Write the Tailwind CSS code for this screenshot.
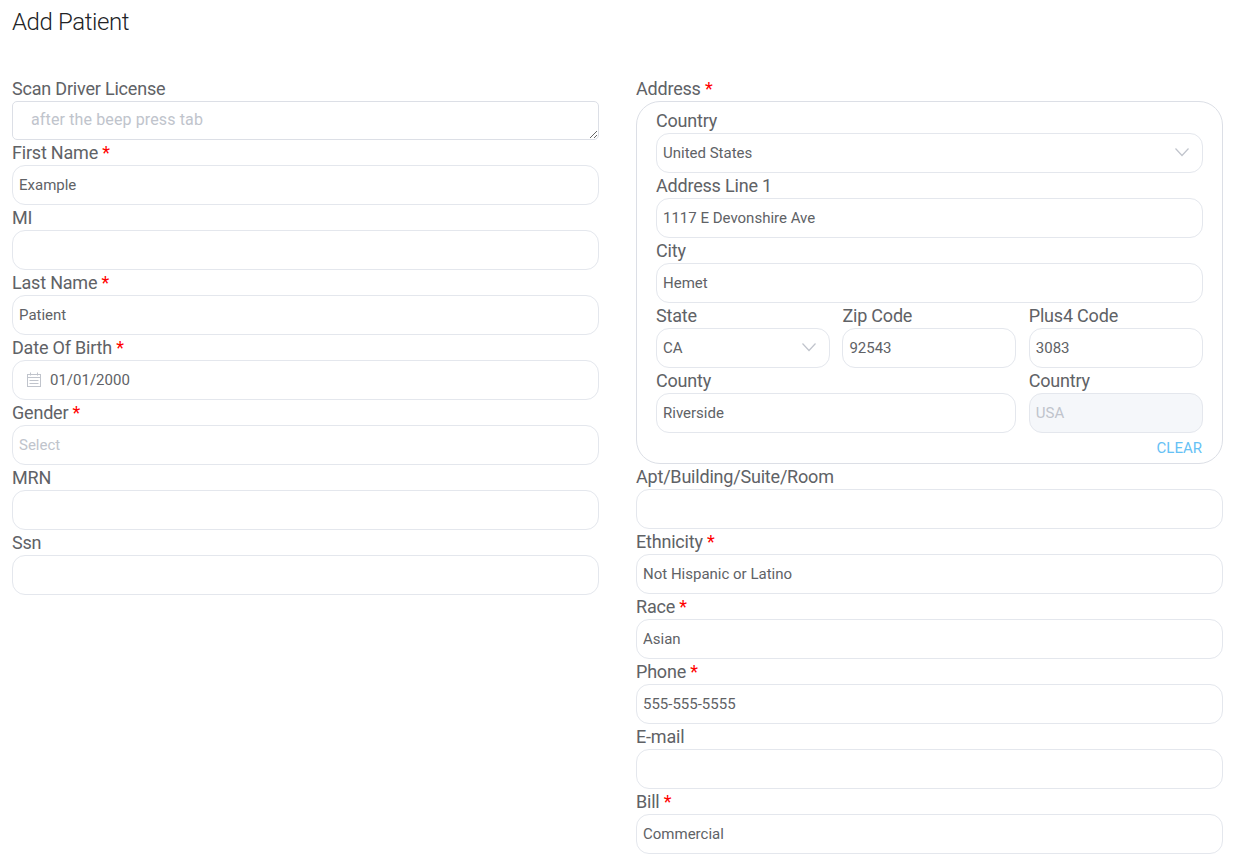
<!DOCTYPE html>
<html>
<head>
<meta charset="utf-8" />
<title>Add Patient</title>
<script src="https://cdn.jsdelivr.net/npm/@tailwindcss/browser@4"></script>
</head>
<body class="bg-white font-['Roboto',sans-serif] overflow-hidden">
<div class="h-[863px] pl-3 pr-[10px] [&_label]:tracking-[-0.2px]">
  <h1 class="h-[76px] pt-[6px] text-[24px] leading-8 font-light tracking-[-0.4px] text-[#222326]">Add Patient</h1>
  <div class="grid grid-cols-2 gap-x-[37px] items-start">

    <!-- left column -->
    <div>
      <label class="block h-[25px] text-[18px] leading-[25px] text-[#606266]">Scan Driver License</label>
      <textarea placeholder="after the beep press tab" class="block w-full h-[39px] border border-[#dcdfe6] rounded-[5px] px-[18px] py-[6px] text-[16px] leading-6 tracking-[0.13px] text-[#606266] placeholder:text-[#c0c4cc] outline-none"></textarea>

      <label class="block h-[25px] text-[18px] leading-[25px] text-[#606266]">First Name <span class="text-[#ff0000]">*</span></label>
      <input value="Example" class="block w-full h-10 border border-[#e4e7ed] rounded-[13px] px-[6px] text-[15px] text-[#606266] outline-none" />

      <label class="block h-[25px] text-[18px] leading-[25px] text-[#606266]">MI</label>
      <input class="block w-full h-10 border border-[#e4e7ed] rounded-[13px] px-[6px] text-[15px] text-[#606266] outline-none" />

      <label class="block h-[25px] text-[18px] leading-[25px] text-[#606266]">Last Name <span class="text-[#ff0000]">*</span></label>
      <input value="Patient" class="block w-full h-10 border border-[#e4e7ed] rounded-[13px] px-[6px] text-[15px] text-[#606266] outline-none" />

      <label class="block h-[25px] text-[18px] leading-[25px] text-[#606266]">Date Of Birth <span class="text-[#ff0000]">*</span></label>
      <div class="flex items-center h-10 border border-[#e4e7ed] rounded-[13px] pl-[13px] text-[15px] text-[#606266]">
        <svg class="w-[16px] h-[16px] mr-[8px] text-[#c0c4cc]" viewBox="0 0 16 16" fill="none" stroke="currentColor" stroke-width="1">
          <rect x="1.5" y="2.5" width="13" height="12" />
          <path d="M1.5 5.5h13M4.5 0.5v3M11.5 0.5v3M3.5 8.5h9M3.5 11.5h9" />
        </svg>
        <span>01/01/2000</span>
      </div>

      <label class="block h-[25px] text-[18px] leading-[25px] text-[#606266]">Gender <span class="text-[#ff0000]">*</span></label>
      <input placeholder="Select" class="block w-full h-10 border border-[#e4e7ed] rounded-[13px] px-[6px] text-[15px] placeholder:text-[#c0c4cc] outline-none" />

      <label class="block h-[25px] text-[18px] leading-[25px] text-[#606266]">MRN</label>
      <input class="block w-full h-10 border border-[#e4e7ed] rounded-[13px] px-[6px] text-[15px] text-[#606266] outline-none" />

      <label class="block h-[25px] text-[18px] leading-[25px] text-[#606266]">Ssn</label>
      <input class="block w-full h-10 border border-[#e4e7ed] rounded-[13px] px-[6px] text-[15px] text-[#606266] outline-none" />
    </div>

    <!-- right column -->
    <div>
      <label class="block h-[25px] text-[18px] leading-[25px] text-[#606266]">Address <span class="text-[#ff0000]">*</span></label>
      <div class="h-[363px] border border-[#dcdfe6] rounded-[24px] px-[19px] pt-[6px]">
        <label class="block h-[25px] text-[18px] leading-[25px] text-[#606266]">Country</label>
        <div class="flex items-center justify-between h-10 border border-[#e4e7ed] rounded-[13px] pl-[6px] pr-[12px] text-[15px] text-[#606266]">
          <span>United States</span>
          <svg class="w-[16px] h-[16px] text-[#c0c4cc]" viewBox="0 0 16 16" fill="none" stroke="currentColor" stroke-width="1.2"><path d="M1.5 3.5L8 10.5L14.5 3.5" /></svg>
        </div>

        <label class="block h-[25px] text-[18px] leading-[25px] text-[#606266]">Address Line 1</label>
        <input value="1117 E Devonshire Ave" class="block w-full h-10 border border-[#e4e7ed] rounded-[13px] px-[6px] text-[15px] text-[#606266] outline-none" />

        <label class="block h-[25px] text-[18px] leading-[25px] text-[#606266]">City</label>
        <input value="Hemet" class="block w-full h-10 border border-[#e4e7ed] rounded-[13px] px-[6px] text-[15px] text-[#606266] outline-none" />

        <div class="grid grid-cols-[174px_174px_174px] gap-x-[12.4px]">
          <div>
            <label class="block h-[25px] text-[18px] leading-[25px] text-[#606266]">State</label>
            <div class="flex items-center justify-between h-10 border border-[#e4e7ed] rounded-[13px] pl-[6px] pr-[12px] text-[15px] text-[#606266]">
              <span>CA</span>
              <svg class="w-[16px] h-[16px] text-[#c0c4cc]" viewBox="0 0 16 16" fill="none" stroke="currentColor" stroke-width="1.2"><path d="M1.5 3.5L8 10.5L14.5 3.5" /></svg>
            </div>
          </div>
          <div>
            <label class="block h-[25px] text-[18px] leading-[25px] text-[#606266]">Zip Code</label>
            <input value="92543" class="block w-full h-10 border border-[#e4e7ed] rounded-[13px] px-[6px] text-[15px] text-[#606266] outline-none" />
          </div>
          <div>
            <label class="block h-[25px] text-[18px] leading-[25px] text-[#606266]">Plus4 Code</label>
            <input value="3083" class="block w-full h-10 border border-[#e4e7ed] rounded-[13px] px-[6px] text-[15px] text-[#606266] outline-none" />
          </div>
          <div class="col-span-2">
            <label class="block h-[25px] text-[18px] leading-[25px] text-[#606266]">County</label>
            <input value="Riverside" class="block w-full h-10 border border-[#e4e7ed] rounded-[13px] px-[6px] text-[15px] text-[#606266] outline-none" />
          </div>
          <div>
            <label class="block h-[25px] text-[18px] leading-[25px] text-[#606266]">Country</label>
            <input disabled value="USA" class="block w-full h-10 border border-[#e4e7ed] bg-[#f5f7fa] rounded-[13px] px-[6px] text-[15px] text-[#c0c4cc] outline-none" />
          </div>
        </div>
        <div class="mt-[5px] pr-px text-right text-[15px] leading-5 text-[#66c1f5]">CLEAR</div>
      </div>

      <label class="block h-[25px] text-[18px] leading-[25px] text-[#606266]">Apt/Building/Suite/Room</label>
      <input class="block w-full h-10 border border-[#e4e7ed] rounded-[13px] px-[6px] text-[15px] text-[#606266] outline-none" />

      <label class="block h-[25px] text-[18px] leading-[25px] text-[#606266]">Ethnicity <span class="text-[#ff0000]">*</span></label>
      <input value="Not Hispanic or Latino" class="block w-full h-10 border border-[#e4e7ed] rounded-[13px] px-[6px] text-[15px] text-[#606266] outline-none" />

      <label class="block h-[25px] text-[18px] leading-[25px] text-[#606266]">Race <span class="text-[#ff0000]">*</span></label>
      <input value="Asian" class="block w-full h-10 border border-[#e4e7ed] rounded-[13px] px-[6px] text-[15px] text-[#606266] outline-none" />

      <label class="block h-[25px] text-[18px] leading-[25px] text-[#606266]">Phone <span class="text-[#ff0000]">*</span></label>
      <input value="555-555-5555" class="block w-full h-10 border border-[#e4e7ed] rounded-[13px] px-[6px] text-[15px] text-[#606266] outline-none" />

      <label class="block h-[25px] text-[18px] leading-[25px] text-[#606266]">E-mail</label>
      <input class="block w-full h-10 border border-[#e4e7ed] rounded-[13px] px-[6px] text-[15px] text-[#606266] outline-none" />

      <label class="block h-[25px] text-[18px] leading-[25px] text-[#606266]">Bill <span class="text-[#ff0000]">*</span></label>
      <input value="Commercial" class="block w-full h-10 border border-[#e4e7ed] rounded-[13px] px-[6px] text-[15px] text-[#606266] outline-none" />
    </div>
  </div>
</div>
</body>
</html>
